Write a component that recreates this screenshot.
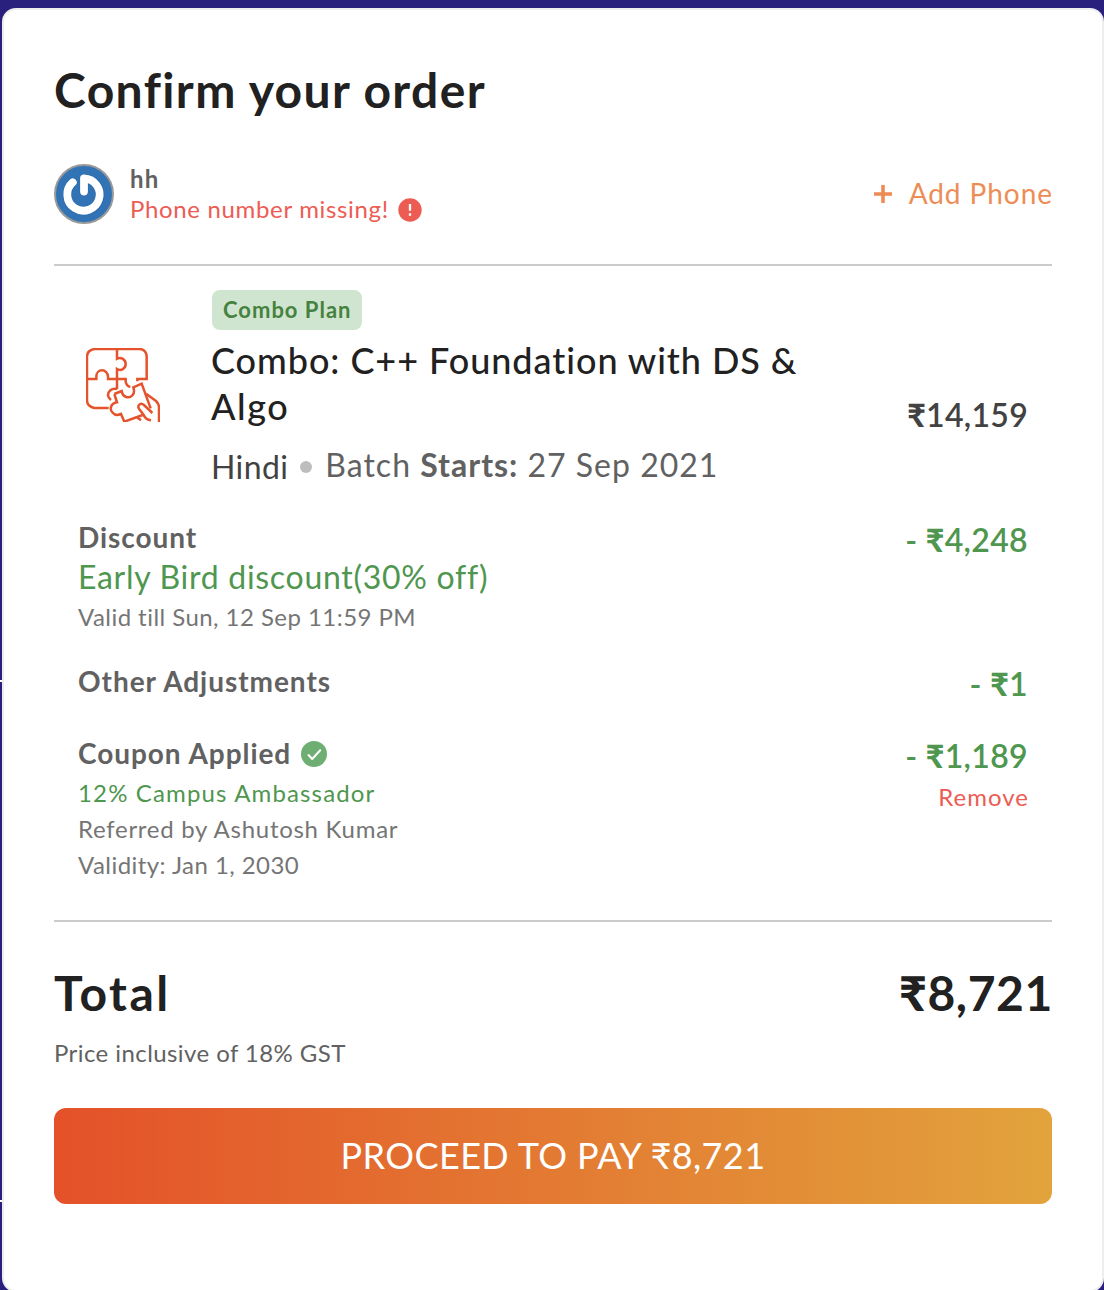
<main class="card">
  <h1>Confirm your order</h1>
  <section class="user">
    <svg class="avatar" viewBox="0 0 60 60">
      <circle cx="30" cy="30" r="29" fill="#3173b5" stroke="#999" stroke-width="2" />
      <path d="M19 18.500 A16.300 16.300 0 1 0 30 14.500 V28" fill="none" stroke="#1f5488" stroke-opacity=".22" stroke-width="9" stroke-linecap="round" stroke-linejoin="round" />
      <path d="M18.800 18.300 A16.200 16.200 0 1 0 30 14.300 V27.500" fill="none" stroke="#fff" stroke-width="7.800" stroke-linecap="round" stroke-linejoin="round" />
    </svg>
    <div class="who">
      <div class="name">hh</div>
      <div class="missing">
        <span>Phone number missing!</span>
        <svg viewBox="0 0 24 24" width="24" height="24"><circle cx="12" cy="12" r="11.700" fill="#ed5c53" /><path d="M12 6v6.800M12 15.300v2.500" stroke="#fff" stroke-width="2.300" /></svg>
      </div>
    </div>
    <div class="add">
      <svg viewBox="0 0 18 18" width="18" height="18"><path d="M9 0v18M0 9h18" stroke="#ee8c56" stroke-width="3.600" /></svg>
      <span>Add Phone</span>
    </div>
  </section>

  <section class="item">
    <svg class="puzzle" viewBox="48 54 222 222" fill="none" stroke="#e5532d" stroke-width="7.500">
      <path d="M116 234H73Q52 230 51 212V78Q53 60 73 57H210Q228 59 230 78V147H202V154" />
      <path d="M141 57V86C153 80 167 88 167 102S153 124 141 117V178" />
      <path d="M51 147H79V140C79 128 87 121 96 121S114 129 114 140V147H167V155Q169 168 181 171" />
      <path d="M141 177C124 173 114 184 114 196Q115 204 123 210" />
      <path d="M133 192L155 183C158 203 178 207 188 195Q195 186 190 172L215 161L242 235M133 192L141 217C121 220 118 239 128 248Q137 259 153 252L163 275L218 255" />
      <path d="M228 191L258 213Q267 221 267 233V276M247 249L222 225C211 216 201 227 207 236L221 255Q227 269 243 271M201 262L213 271" />
    </svg>
    <div class="info">
      <span class="badge">Combo Plan</span>
      <h2>Combo: C++ Foundation with DS &amp;<br /><span class="second">Algo</span></h2>
      <div class="meta"><span class="lang">Hindi</span><i></i><span class="batch">Batch <b>Starts:</b> 27 Sep 2021</span></div>
    </div>
    <div class="price"><span class="rupee">₹</span>14,159</div>
  </section>

  <section class="lines">
    <div class="row discount">
      <div>
        <h3>Discount</h3>
        <p class="early">Early Bird discount(30% off)</p>
        <p class="note valid">Valid till Sun, 12 Sep 11:59 PM</p>
      </div>
      <div class="amount">- <span class="rupee">₹</span>4,248</div>
    </div>
    <div class="row other">
      <h3>Other Adjustments</h3>
      <div class="amount">- <span class="rupee">₹</span>1</div>
    </div>
    <div class="row coupon">
      <div>
        <h3 class="applied"><span>Coupon Applied</span>
          <svg viewBox="0 0 26 26" width="26" height="26"><circle cx="13" cy="13" r="13" fill="#6fae72" /><path d="M7.500 14l3.700 4 8-8.700" fill="none" stroke="#fff" stroke-width="2" stroke-linecap="round" stroke-linejoin="round" /></svg>
        </h3>
        <p class="note green">12% Campus Ambassador</p>
        <p class="note referrer">Referred by Ashutosh Kumar</p>
        <p class="note">Validity: Jan 1, 2030</p>
      </div>
      <div class="amount">- <span class="rupee">₹</span>1,189<div class="remove">Remove</div></div>
    </div>
  </section>

  <section class="total"><span class="label">Total</span><span class="sum"><span class="rupee">₹</span>8,721</span></section>
  <p class="gst">Price inclusive of 18% GST</p>
  <button>PROCEED TO PAY ₹8,721</button>
</main>

<style>
  :global(body) { background: linear-gradient(#29207d 680px, #fff 680px 682px, #29207d 682px 1200px, #fff 1200px 1202px, #29207d 1202px); overflow: hidden; }
  * { box-sizing: border-box; margin: 0; }
  :global(#app) { display: flow-root; }
  .card { margin: 8px 0 0 2px; width: 1102px; height: 1284px; padding: 48px 50px 0; border: 2px solid #eee; border-radius: 14px; background: #fff; color: #212121; font-family: Lato, sans-serif; }
  h1 { font-size: 48px; line-height: 64px; font-weight: 700; letter-spacing: 1.4px; }
  svg { display: block; flex: none; }
  .user { display: flex; align-items: center; height: 142px; margin-top: 2px; border-bottom: 2px solid #ccc; }
  .avatar { width: 60px; height: 60px; }
  .who { margin-left: 16px; flex: 1; font-size: 24px; line-height: 30px; }
  .name { font-weight: 700; color: #616161; letter-spacing: 1.2px; }
  .missing { display: flex; align-items: center; gap: 9.500px; color: #ed5c53; letter-spacing: .66px; }
  .missing svg { margin-top: 1px; }
  .add { display: flex; align-items: center; gap: 17px; margin-right: -1px; color: #ee8c56; font-size: 28px; line-height: 34px; letter-spacing: .95px; }
  .add span { margin-bottom: 2px; }
  .item { display: flex; padding: 24px 24px 0 32px; }
  .puzzle { width: 74px; height: 74px; margin-top: 58px; }
  .info { margin-left: 52px; flex: 1; }
  .badge { display: flex; width: 150px; height: 40px; padding: 0 0 1px 11px; align-items: center; border-radius: 8px; background: #d0e5cf; color: #46823f; font-size: 22px; font-weight: 700; letter-spacing: 1px; }
  h2 { margin: 7px 0 0 -1px; font-size: 36px; line-height: 46px; font-weight: 500; letter-spacing: .95px; white-space: nowrap; }
  .second { letter-spacing: 1.6px; }
  .meta { display: flex; align-items: center; height: 46px; margin: 14px 0 0 -1px; font-size: 32px; color: #616161; white-space: nowrap; }
  .meta i { width: 12px; height: 12px; border-radius: 50%; background: #bdbdbd; margin: 2px 13px 0 12px; }
  .lang { color: #424242; letter-spacing: .4px; }
  .batch { margin-bottom: 4px; letter-spacing: 1px; }
  .rupee { font-weight: 900; }
  .price { margin: 102px 0 0; font-size: 32px; line-height: 46px; font-weight: 600; color: #424242; letter-spacing: .3px; }
  .lines { padding: 0 24px; }
  .row { display: flex; justify-content: space-between; }
  h3 { font-size: 28px; line-height: 36px; font-weight: 700; color: #616161; letter-spacing: .95px; }
  .early { font-size: 32px; line-height: 44px; color: #4f964f; letter-spacing: .71px; }
  .note { font-size: 24px; line-height: 36px; color: #757575; letter-spacing: .45px; }
  .note.green { margin-top: 4px; color: #4f964f; letter-spacing: 1.15px; }
  .note.referrer { letter-spacing: .72px; }
  .amount { padding-top: 1px; font-size: 32px; line-height: 40px; font-weight: 600; color: #4f964f; text-align: right; letter-spacing: .35px; }
  .remove { margin: 1px -1px 0 0; font-size: 24px; font-weight: 400; color: #ed5c53; letter-spacing: 1px; }
  .discount { height: 144px; margin-top: 30px; }
  .other { height: 72px; }
  .coupon { height: 185px; }
  .applied { display: flex; align-items: center; gap: 10px; }
  .applied svg { margin-top: 1px; }
  .total { display: flex; justify-content: space-between; padding-top: 39px; border-top: 2px solid #ccc; font-size: 48px; line-height: 64px; font-weight: 700; }
  .label { letter-spacing: 2.5px; }
  .sum { margin-right: -1px; letter-spacing: .6px; }
  .gst { font-size: 24px; line-height: 36px; margin-top: 10px; color: #616161; letter-spacing: .42px; }
  button { display: block; width: 998px; height: 96px; margin-top: 37px; padding: 0 0 3px; border: 0; border-radius: 12px; background: linear-gradient(90deg, #e45129, #e2a33c); color: #fff; font: 400 36px Lato, sans-serif; letter-spacing: .4px; }
</style>
